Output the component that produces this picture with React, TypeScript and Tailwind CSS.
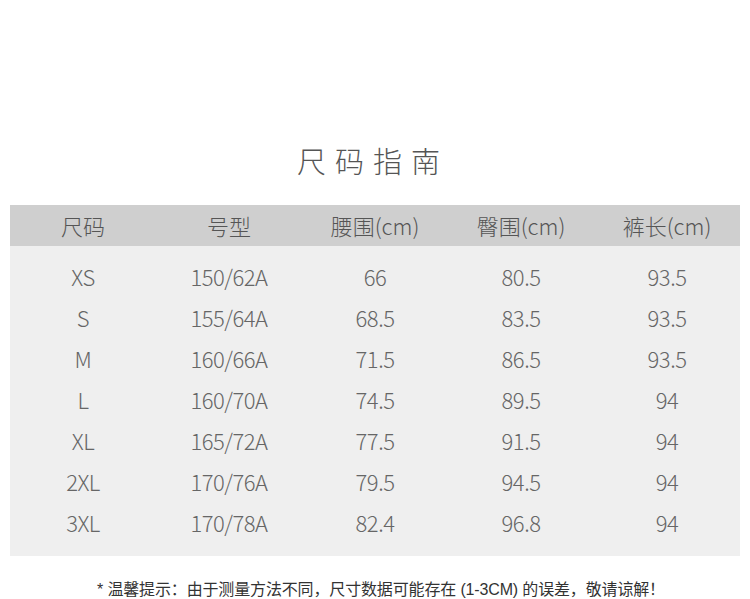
const headers = ["尺码", "号型", "腰围(cm)", "臀围(cm)", "裤长(cm)"];

const rows: string[][] = [
  ["XS", "150/62A", "66", "80.5", "93.5"],
  ["S", "155/64A", "68.5", "83.5", "93.5"],
  ["M", "160/66A", "71.5", "86.5", "93.5"],
  ["L", "160/70A", "74.5", "89.5", "94"],
  ["XL", "165/72A", "77.5", "91.5", "94"],
  ["2XL", "170/76A", "79.5", "94.5", "94"],
  ["3XL", "170/78A", "82.4", "96.8", "94"],
];

export default function App() {
  return (
    <div className="w-[750px] h-[599px] bg-white overflow-hidden font-['Noto_Sans_CJK_SC',sans-serif]">
      <div className="pt-[140px] h-[205px] text-center">
        <h1 className="text-[29px] leading-[40px] tracking-[9px] text-[#555] font-light pr-[4px]">尺码指南</h1>
      </div>

      <div className="mx-[10px] w-[730px]">
        <div className="grid grid-cols-5 h-[41px] items-center bg-[#cfcfcf]">
          {headers.map((h) => (
            <div key={h} className="text-center text-[22px] leading-[41px] text-[#555] font-light">
              {h}
            </div>
          ))}
        </div>
        <div className="bg-[#efefef] pt-[10px] pb-[13px]">
          {rows.map((r) => (
            <div key={r[0]} className="grid grid-cols-5 h-[41px] items-center">
              {r.map((c, i) => (
                <div key={i} className="text-center text-[22px] leading-[41px] text-[#666] font-light tracking-[-0.5px]">
                  {c}
                </div>
              ))}
            </div>
          ))}
        </div>
      </div>

      <p className="mt-[24px] pl-[12px] text-center text-[16px] leading-[20px] text-[#333] tracking-[-0.15px] font-['Liberation_Sans','Noto_Sans_CJK_SC',sans-serif]">
        * 温馨提示：由于测量方法不同，尺寸数据可能存在 (1-3CM) 的误差，敬请谅解！
      </p>
    </div>
  );
}
